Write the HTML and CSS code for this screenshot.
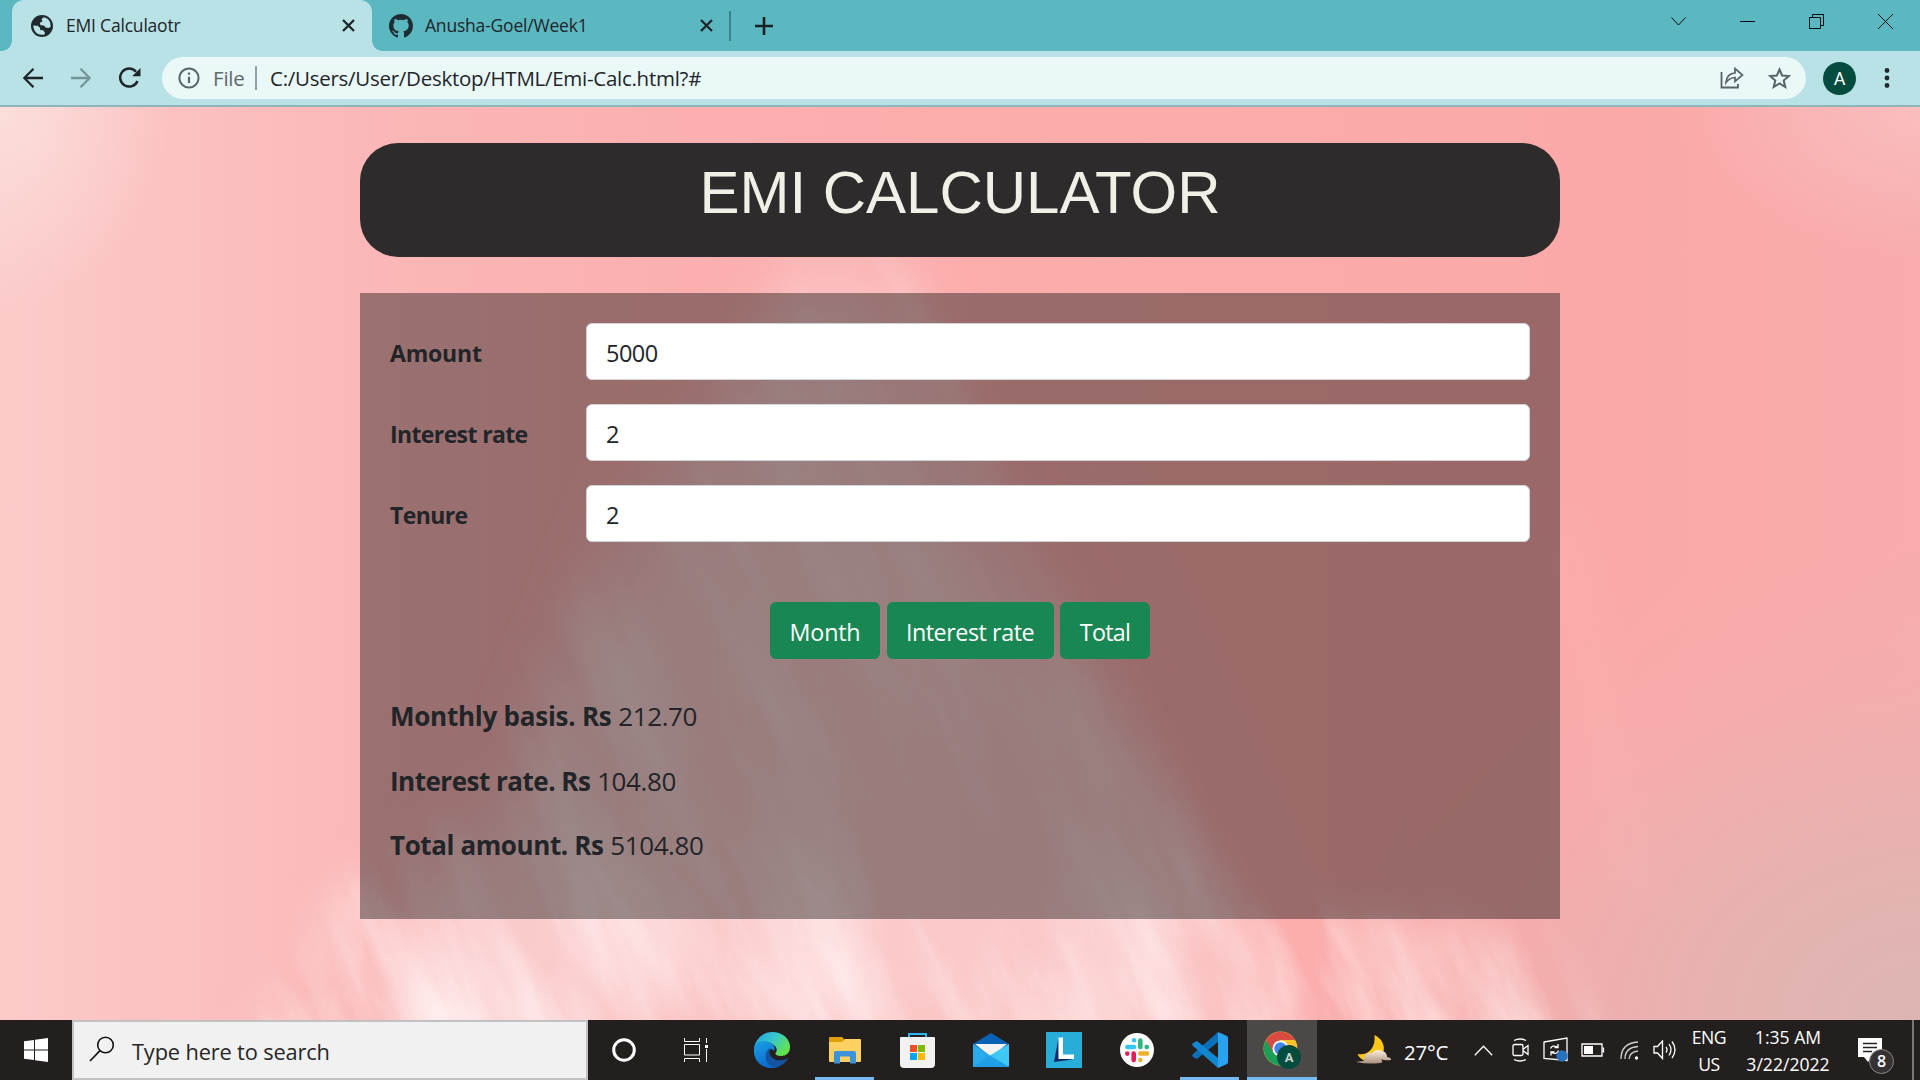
FILE: index.html
```html
<!DOCTYPE html>
<html lang="en">
<head>
<meta charset="utf-8">
<title>EMI Calculaotr</title>
<link rel="stylesheet" href="styles.css">
</head>
<body>
<div class="screen">
  <header class="tabstrip">
    <div class="tab tab-active">
      <svg class="favicon" width="22" height="22" viewBox="0 0 22 22"><circle cx="11" cy="11" r="11" fill="#202a2e"/><path d="M2.200 10.500L6.500 10.700L9 12.700L9.200 15L12 15.300L14 17.500L13.500 19.500Q10 20.500 6.500 18.700Q2.500 16 2.200 10.500Z" fill="#b8e2e5"/><path d="M12.500 2.300Q17 3 19 7L19.800 11.500L17.800 13L14.500 12.500L13 10.500L9.500 10.200L8.800 7.700L11.500 6.500L10.500 4.500Z" fill="#b8e2e5"/></svg>
      <span class="tab-title">EMI Calculaotr</span>
      <svg class="tab-x" width="13" height="13" viewBox="0 0 13 13"><path d="M1 1L12 12M12 1L1 12" stroke="#1c2427" stroke-width="2.3"/></svg>
    </div>
    <div class="tab tab-idle">
      <svg width="24" height="24" viewBox="0 0 16 16"><path fill="#1e2d33" d="M8 0C3.58 0 0 3.58 0 8c0 3.54 2.29 6.53 5.47 7.59.4.07.55-.17.55-.38 0-.19-.01-.82-.01-1.49-2.01.37-2.53-.49-2.69-.94-.09-.23-.48-.94-.82-1.13-.28-.15-.68-.52-.01-.53.63-.01 1.08.58 1.23.82.72 1.21 1.87.87 2.33.66.07-.52.28-.87.51-1.07-1.78-.2-3.64-.89-3.64-3.95 0-.87.31-1.59.82-2.15-.08-.2-.36-1.02.08-2.12 0 0 .67-.21 2.2.82a7.4 7.4 0 0 1 4 0c1.53-1.04 2.2-.82 2.2-.82.44 1.1.16 1.92.08 2.12.51.56.82 1.27.82 2.15 0 3.07-1.87 3.75-3.65 3.95.29.25.54.73.54 1.48 0 1.07-.01 1.93-.01 2.2 0 .21.15.46.55.38A8.01 8.01 0 0 0 16 8c0-4.42-3.58-8-8-8z"/></svg>
      <span class="tab-title">Anusha-Goel/Week1</span>
      <svg class="tab-x" width="13" height="13" viewBox="0 0 13 13"><path d="M1 1L12 12M12 1L1 12" stroke="#1c2427" stroke-width="2.3"/></svg>
    </div>
    <span class="tab-divider"></span>
    <svg class="new-tab" width="18" height="18" viewBox="0 0 18 18"><path d="M9 0V18M0 9H18" stroke="#172023" stroke-width="2.6"/></svg>
    <div class="window-controls">
      <svg width="15" height="15" viewBox="0 0 15 15"><path d="M.5 3.5L7.5 11L14.5 3.5" class="thin"/></svg>
      <svg width="15" height="15" viewBox="0 0 15 15"><path d="M0 7.5H15" class="thin"/></svg>
      <svg width="15" height="15" viewBox="0 0 15 15"><path d="M.5 3.5H11.500V14.500H.5ZM3.500 3.500V.5H14.500V11.500H11.500" class="thin"/></svg>
      <svg width="15" height="15" viewBox="0 0 15 15"><path d="M0 0L15 15M15 0L0 15" class="thin"/></svg>
    </div>
  </header>

  <nav class="toolbar">
    <svg class="nav-icon" width="20" height="20" viewBox="0 0 20 20"><path d="M20 10H1.500M10.500 .8L1.300 10L10.500 19.200" fill="none" stroke="#1f2628" stroke-width="2.3"/></svg>
    <svg class="nav-icon" width="20" height="20" viewBox="0 0 20 20"><path d="M0 10H18.500M9.500 .8L18.700 10L9.500 19.200" fill="none" stroke="#75949a" stroke-width="2.3"/></svg>
    <svg class="nav-icon" width="22" height="22" viewBox="0 0 22 22"><path d="M18.500 14A9 9 0 1 1 17 4.700" fill="none" stroke="#1f2628" stroke-width="2.500"/><path d="M21.500 1V9.300H13.200Z" fill="#1f2628"/></svg>
    <div class="address">
      <svg width="22" height="22" viewBox="0 0 22 22"><circle cx="11" cy="11" r="9.600" fill="none" stroke="#5c6568" stroke-width="2"/><path d="M11 9.700V16M11 5.500V7.700" stroke="#5c6568" stroke-width="2.200"/></svg>
      <span class="scheme">File</span>
      <span class="address-divider"></span>
      <span class="url">C:/Users/User/Desktop/HTML/Emi-Calc.html?#</span>
      <svg class="share" width="24" height="22" viewBox="0 0 24 22"><path d="M1.500 5V20.500H18V17" fill="none" stroke="#596366" stroke-width="1.800"/><path d="M6 15.500C6.500 9.500 10 6.300 15 6V1.500L22.500 8L15 14.500V10.500C11 10.600 8.500 12 6 15.500Z" fill="none" stroke="#596366" stroke-width="1.700"/></svg>
      <svg width="23" height="22" viewBox="0 0 23 22"><path d="M11.500 2.500L14.100 8.500L20.800 9.100L15.700 13.500L17.300 20L11.500 16.500L5.700 20L7.300 13.500L2.200 9.100L8.900 8.500Z" fill="none" stroke="#596366" stroke-width="2"/></svg>
    </div>
    <span class="avatar">A</span>
    <svg width="6" height="20" viewBox="0 0 6 20"><g fill="#20292c"><circle cx="3" cy="2.500" r="2.400"/><circle cx="3" cy="10" r="2.400"/><circle cx="3" cy="17.500" r="2.400"/></g></svg>
  </nav>

  <main class="page">
    <svg class="backdrop" width="1920" height="913" viewBox="0 107 1920 913" preserveAspectRatio="none">
      <defs>
        <filter id="soft" x="-50%" y="-50%" width="200%" height="200%"><feGaussianBlur stdDeviation="38"/></filter>
        <filter id="edge" x="-50%" y="-50%" width="200%" height="200%"><feGaussianBlur stdDeviation="22"/></filter>
        <filter id="streaks" x="0" y="0" width="100%" height="100%"><feTurbulence type="fractalNoise" baseFrequency="0.013 0.003" numOctaves="5" seed="8"/><feColorMatrix values="0 0 0 0 1  0 0 0 0 .91  0 0 0 0 .91  2 0 0 0 -.7"/></filter>
        <linearGradient id="down" x1="0" y1="0" x2="0" y2="1"><stop offset="0" stop-color="#fff" stop-opacity=".25"/><stop offset=".7" stop-color="#fff" stop-opacity=".45"/><stop offset="1" stop-color="#fff"/></linearGradient>
        <mask id="plume" maskUnits="userSpaceOnUse" x="0" y="107" width="1920" height="913"><path d="M805 240L900 245L1000 480L1160 760L1240 900L1540 940L1600 1060H240L330 900L460 800L620 520L740 380Z" fill="url(#down)" filter="url(#edge)"/></mask>
      </defs>
      <path d="M805 270L880 275L960 480L1130 760L1300 1060H400L430 880L540 760L640 520L740 380Z" fill="#fbdadb" opacity=".62" filter="url(#soft)"/>
      <g mask="url(#plume)"><rect x="-200" y="-300" width="2400" height="1900" transform="rotate(-24 960 560)" filter="url(#streaks)"/></g>
      <g fill="none" stroke="#ffd0cf" filter="url(#edge)" opacity=".25" stroke-width="12"><path d="M1080 420Q1200 700 1360 1000M1560 520Q1600 700 1640 900"/></g>
    </svg>
    <div class="container">
      <h1 class="title">EMI CALCULATOR</h1>
      <form class="panel">
        <div class="field"><label>Amount</label><div class="input">5000</div></div>
        <div class="field"><label class="tight">Interest rate</label><div class="input">2</div></div>
        <div class="field"><label class="tight">Tenure</label><div class="input">2</div></div>
        <div class="actions"><button type="button" class="btn btn-month">Month</button><button type="button" class="btn btn-rate">Interest rate</button><button type="button" class="btn btn-total">Total</button></div>
        <p class="result"><b>Monthly basis. Rs</b> <span>212.70</span></p>
        <p class="result"><b class="tight">Interest rate. Rs</b> <span>104.80</span></p>
        <p class="result"><b class="tight">Total amount. Rs</b> <span>5104.80</span></p>
      </form>
    </div>
  </main>

  <footer class="taskbar">
    <div class="cell start"><svg width="24" height="24" viewBox="0 0 24 24"><path fill="#fff" d="M0 3.300L10 2V11.400H0ZM11 1.800L24 0V11.400H11ZM0 12.500H10V22L0 20.700ZM11 12.500H24V24L11 22.200Z"/></svg></div>
    <div class="search"><svg width="26" height="26" viewBox="0 0 26 26"><circle cx="16.500" cy="9" r="7.800" fill="none" stroke="#111" stroke-width="1.600"/><path d="M11 14.700L1 25" stroke="#111" stroke-width="1.700"/></svg><span>Type here to search</span></div>
    <div class="cell"><svg width="24" height="24" viewBox="0 0 24 24"><circle cx="12" cy="12" r="10.300" fill="none" stroke="#fff" stroke-width="3"/></svg></div>
    <div class="cell"><svg width="24" height="24" viewBox="0 0 24 24"><path d="M.5 0V3.500H15.500V0M.5 6.500H15.500V17H.5ZM.5 24V20.500H15.500V24M22.500 0V5M22.500 11V24" fill="none" stroke="#fff"/><rect x="21" y="7" width="3" height="3" fill="#fff"/></svg></div>
    <div class="apps">
      <div class="app"><svg width="36" height="36" viewBox="0 0 36 36"><defs><linearGradient id="e1" x1="0" y1="0" x2="1" y2=".6"><stop offset="0" stop-color="#239be0"/><stop offset=".5" stop-color="#36c6d0"/><stop offset="1" stop-color="#65e34b"/></linearGradient><linearGradient id="e2" x1="0" y1="0" x2=".5" y2="1"><stop offset="0" stop-color="#1aa0e4"/><stop offset="1" stop-color="#0969ce"/></linearGradient></defs><path d="M0 17C1 7 9 0 18 0C29 0 36 7 36 15C36 21 32 24 27 24C23 24 21 22.500 21.500 21C23 19 23.500 17 21 14C14 7 4 9 0 17Z" fill="url(#e1)"/><path d="M0 17C1.500 10 8 8 13 9.500C19 11 22 15 20 19C18 16 14 17 14 22C14 29 23 34 29 31C26 35 22 36 18 36C7 36 -1 28 0 17Z" fill="url(#e2)"/><path d="M15.500 16C9 21 11 34 21 35.500C26 35 31 31 33.500 27.500C34 26.500 33 26.500 32 27C26 30 17 28 15.500 21Z" fill="#14539f"/></svg></div>
      <div class="app app-open"><svg width="32" height="27" viewBox="0 0 32 27"><path d="M0 1Q0 0 1 0H13L16 3V8H0Z" fill="#e0a006"/><path d="M0 5H13L16 2H31Q32 2 32 3V24Q32 25 31 25H1Q0 25 0 24Z" fill="#fdd062"/><path d="M5 26.500V16Q5 14 7 14H25Q27 14 27 16V26.500H21V19.500H11V26.500Z" fill="#3c93db"/></svg></div>
      <div class="app"><svg width="35" height="35" viewBox="0 0 35 35"><path d="M9 7V1H26V7" fill="none" stroke="#29b6f2" stroke-width="2"/><path d="M0 5Q0 4 1 4H34Q35 4 35 5V31Q35 35 31 35H4Q0 35 0 31Z" fill="#f2f2f2"/><path fill="#f25022" d="M10 12H17V19H10Z"/><path fill="#7fba00" d="M18 12H25V19H18Z"/><path fill="#00a4ef" d="M10 20H17V27H10Z"/><path fill="#ffb900" d="M18 20H25V27H18Z"/></svg></div>
      <div class="app"><svg width="36" height="34" viewBox="0 0 36 34"><path d="M0 11L18 0L36 11V20H0Z" fill="#0961b5"/><path d="M2 11H34L18 24Z" fill="#f2f2f2"/><path d="M0 11L18 23L36 34H0Z" fill="#2aa9ec"/><path d="M36 11V34L16 23Z" fill="#40c8f5"/><path d="M0 34L17 22.500L36 34Z" fill="#209ee7"/></svg></div>
      <div class="app"><svg width="36" height="36" viewBox="0 0 36 36"><path fill="#27add8" d="M0 0H36V36H0Z"/><path fill="#0b2c66" d="M12.500 6L8 30L27 27.500L13 26Z"/><path fill="#fff" d="M12.500 5.500H17V22.500H28V27H12.500Z"/></svg></div>
      <div class="app"><svg width="34" height="34" viewBox="0 0 34 34"><circle cx="17" cy="17" r="17" fill="#fff"/><g stroke-width="4.600" stroke-linecap="round"><path d="M14 7.300H14.100M14 14H7.300" stroke="#36c5f0"/><path d="M20.300 7.500V14M26.700 14H26.800" stroke="#2eb67d"/><path d="M20.300 20.500H27M20.300 27V27.100" stroke="#ecb22e"/><path d="M13.700 20.500V27M7.300 20.500V20.600" stroke="#e01e5a"/></g></svg></div>
      <div class="app app-open"><svg width="36" height="36" viewBox="0 0 36 36"><path d="M26 0V10L5 27L1 25Q-.5 23.500 1 22Z" fill="#0b70b8"/><path d="M26 36V26L5 9L1 11Q-.5 12.500 1 14Z" fill="#1286cf"/><path d="M26 0L35 4Q36 4.500 36 6V30Q36 31.500 35 32L26 36Z" fill="#29a3ef"/></svg></div>
      <div class="app app-open app-current"><svg width="38" height="38" viewBox="0 0 38 38"><circle cx="17.500" cy="17.500" r="17" fill="#fbc22d"/><path d="M3 9A17 17 0 0 1 32 9H17.500L9 21Z" fill="#d94b40"/><path d="M3 9A17 17 0 0 0 17 34.500L23 24L10 21Z" fill="#1d9e56"/><circle cx="17.500" cy="17.500" r="8" fill="#fff"/><circle cx="17.500" cy="17.500" r="6.200" fill="#4285e8"/><circle cx="26" cy="26" r="12" fill="#044c3e"/><text x="26" y="31" text-anchor="middle" class="badge-a">A</text></svg></div>
    </div>
    <div class="tray">
      <svg class="moon" width="36" height="30" viewBox="0 0 36 30"><defs><linearGradient id="cl" x1="0" y1="0" x2="0" y2="1"><stop offset="0" stop-color="#fff0dc"/><stop offset="1" stop-color="#a8917e"/></linearGradient></defs><path d="M18.500 0C29 5 31 17 23 23C16 29 5 27 1.500 19C12 21 20 13 18.500 0Z" fill="#fcc81b"/><path d="M8 22Q11 17 16 18Q20 13 26 16Q31 17 31 22Q36 23 35 25Q28 26 25 24Q28 28 24 28Q12 29.500 0 27Q5 26 8 26Z" fill="url(#cl)"/></svg>
      <span class="temp">27°C</span>
      <svg class="up" width="19" height="11" viewBox="0 0 19 11"><path d="M.8 10.200L9.500 1.200L18.200 10.200" class="line"/></svg>
      <svg class="cam" width="18" height="24" viewBox="0 0 18 24"><path d="M2 2.500Q8 -.5 14 2.500M2 21.500Q8 24.500 14 21.500M2.500 6.500H9.500Q11 6.500 11 8V16Q11 17.500 9.500 17.500H2.500Q1 17.500 1 16V8Q1 6.500 2.500 6.500M11.500 11L16 7.500V16.500L11.500 13" class="line"/></svg>
      <svg class="sync" width="26" height="26" viewBox="0 0 26 26"><path d="M1 5L24 1V23.500L1 21.500Z" class="line"/><path d="M7.500 11.500Q9 7.500 14.500 10M15 7V10.500H11.500M15.500 13.500Q14 18 8.500 15.500M8 18.500V15H11.500" class="line"/><circle cx="19" cy="19" r="5.700" fill="#2b72be"/></svg>
      <svg class="battery" width="24" height="14" viewBox="0 0 24 14"><path d="M1 1H21V13H1ZM22.500 4.500V9.500" class="line"/><path d="M3 3H12V11H3Z" fill="#fff"/></svg>
      <svg class="wifi" width="19" height="19" viewBox="0 0 19 19"><path d="M1 18Q1 2 18 1M5 18Q5 6.500 18 5.500M9 18Q9.500 11 18 10" class="line" opacity=".8"/><circle cx="16.500" cy="17" r="1.700" fill="#fff"/></svg>
      <svg class="sound" width="24" height="20" viewBox="0 0 24 20"><path d="M1 6.500H4.500L9.500 1V18.500L4.500 13H1Z" class="line"/><path d="M13 7Q15 9.700 13 12.500M16 4Q20 9.700 16 15.500M19 1.500Q25 9.700 19 18" class="line"/></svg>
      <div class="stack lang"><span>ENG</span><span>US</span></div>
      <div class="stack clock"><span>1:35 AM</span><span>3/22/2022</span></div>
      <div class="notes"><svg width="24" height="25" viewBox="0 0 24 25"><path d="M0 0H24V19H14L10 24L6 19H0Z" fill="#fff"/><path d="M5 5.500H19M5 9.500H19M5 13.500H14" stroke="#222" stroke-width="1.300"/></svg><span class="count">8</span></div>
      <span class="show-desktop"></span>
    </div>
  </footer>
</div>
</body>
</html>
```
FILE: styles.css
```css
* { box-sizing: border-box; }
body { margin: 0; font-family: "Open Sans", "Noto Sans", sans-serif; color: #212529; }
svg { display: block; flex: none; }
.screen { width: 1920px; height: 1080px; overflow: hidden; display: flex; flex-direction: column; }
.thin { fill: none; stroke: #050c0e; stroke-width: 1; }
.line { fill: none; stroke: #fff; stroke-width: 1.3; }

/* browser tabs */
.tabstrip { height: 51px; background: #5bb8c1; display: flex; align-items: center; padding-left: 12px; }
.tab { display: flex; align-items: center; height: 51px; font-size: 17.5px; letter-spacing: -.2px; white-space: nowrap; }
.tab-active { position: relative; width: 360px; background: #b8e2e5; border-radius: 12px 12px 0 0; padding: 0 17px 0 19px; }
.tab-active::before, .tab-active::after { content: ""; position: absolute; bottom: 0; width: 10px; height: 10px; }
.tab-active::before { left: -10px; background: radial-gradient(circle at 0 0, transparent 9.5px, #b8e2e5 10px); }
.tab-active::after { right: -10px; background: radial-gradient(circle at 100% 0, transparent 9.5px, #b8e2e5 10px); }
.tab-title { margin: -1px 0 0 13px; }
.tab-x { margin-left: auto; }
.tab-idle { width: 341px; padding-left: 17px; }
.tab-idle .tab-title { margin-left: 12px; letter-spacing: -.2px; }
.tab-divider { width: 2px; height: 30px; margin-left: 16px; background: #3c8188; }
.new-tab { margin-left: 24px; }
.window-controls { display: flex; gap: 54px; margin-left: auto; padding: 0 27px 8px 0; }

/* address row */
.toolbar { height: 56px; background: #b8e2e5; border-bottom: 2px solid #8fb4b9; display: flex; align-items: center; padding: 0 30px 0 23px; }
.nav-icon { margin-right: 28px; }
.nav-icon + .nav-icon + .nav-icon { margin-right: 21px; }
.address { flex: 1; height: 42px; margin-right: 17px; border-radius: 21px; background: #ebf8f8; display: flex; align-items: center; padding: 0 15px 0 16px; font-size: 20.5px; letter-spacing: -.2px; }
.scheme { width: 42px; margin-left: 13px; color: #5f686b; }
.address-divider { width: 2px; height: 24px; background: #949fa1; }
.url { margin-left: 13px; letter-spacing: -.27px; }
.share { margin: 0 24px 0 auto; }
.avatar { width: 33px; height: 33px; border-radius: 50%; background: #044c3e; color: #fff; font: 18px/33px Roboto, sans-serif; text-align: center; margin-right: 28px; }

/* calculator */
.page { position: relative; flex: 1; overflow: hidden; background: radial-gradient(ellipse 620px 480px at 100% 100%, #dcb6b4 0, #e2b4b2cc 35%, #f0b0af66 70%, transparent 100%), radial-gradient(ellipse 170px 200px at 0 0, #fbdedb, transparent), radial-gradient(ellipse 240px 150px at 100% 0, #fabdbe, transparent), linear-gradient(90deg, #fbcbca 0, #fbbfbf 11%, #fbb5b5 22%, #fbafae 38%, #fbacab 60%, #faa9a8 85%, #f8acac 100%); }
.backdrop { position: absolute; inset: 0; }
.container { position: relative; width: 1200px; margin: 36px auto 0; }
.title { height: 114px; margin: 0 0 36px; padding-top: 14px; border-radius: 38px; background: #2d2b2c; color: #f1f0e7; font: 60px/72px "Liberation Sans", Arial, sans-serif; text-align: center; }
.panel { height: 626px; padding: 30px; background: rgba(0, 0, 0, .385); }
.field { display: flex; margin-bottom: 24px; font-size: 23.5px; line-height: 57px; }
.field label { width: 196px; font-weight: 700; font-size: 23px; letter-spacing: -.2px; padding-top: 2px; height: 57px; }
.field label.tight { letter-spacing: -.62px; }
.field .input { flex: 1; height: 57px; padding: 1px 19px 0; background: #fff; border: 1px solid #ced4da; border-radius: 6px; letter-spacing: -.5px; }
.actions { display: flex; justify-content: center; gap: 6.5px; margin: 60px 0 37px; }
.btn { height: 57px; padding: 3px 0 0; border: 0; border-radius: 6px; background: #198754; color: #fff; font: 23.3px "Open Sans", sans-serif; letter-spacing: -.45px; }
.btn-month { width: 110px; letter-spacing: -.2px; }
.btn-rate { width: 167px; }
.btn-total { width: 90px; letter-spacing: -.7px; }
.result { margin: 0 0 24px; font-size: 26px; line-height: 40.6px; }
.result b { letter-spacing: -.25px; }
.result .tight { letter-spacing: -.5px; }
.result span { letter-spacing: -.4px; }
.result:last-child b { letter-spacing: -.4px; }

/* taskbar */
.taskbar { height: 60px; background: #221f1e; display: flex; color: #fff; }
.cell { width: 72px; display: flex; align-items: center; justify-content: center; }
.search { width: 516px; border: 2px solid #c2c2c2; background: #f1f1f1; color: #262626; display: flex; align-items: center; padding: 0 0 2px 16px; font-size: 21.8px; letter-spacing: -.15px; }
.search span { margin: 4px 0 0 16px; }
.search svg { margin-left: -1px; margin-right: 1px; }
.apps { display: flex; padding-left: 3px; }
.app { width: 73px; height: 60px; display: flex; justify-content: center; align-items: center; position: relative; }
.app-open::after { content: ""; position: absolute; left: 7px; right: 7px; bottom: 0; height: 3px; background: #76b9ed; }
.app-current { width: 70px; margin-left: 1px; background: #4b4948; }
.app-current::after { left: 0; right: 0; }
.badge-a { font: 700 13px Roboto, sans-serif; fill: #c5d7d2; }
.tray { display: flex; align-items: center; margin-left: auto; }
.temp { margin: 4px 24px 0 12px; font-size: 20.5px; letter-spacing: -.2px; width: 46px; }
.cam { margin-left: 19px; }
.sync { margin-left: 13px; }
.battery { margin-left: 12px; }
.wifi { margin-left: 15px; }
.sound { margin-left: 14px; }
.stack { display: flex; flex-direction: column; text-align: center; font-size: 17.6px; line-height: 27px; padding-top: 1px; letter-spacing: -.15px; }
.lang { width: 40px; margin-left: 12px; letter-spacing: -.5px; }
.clock { width: 100px; margin-left: 9px; letter-spacing: 0; }
.notes { position: relative; width: 24px; margin-left: 20px; }
.count { position: absolute; left: 11px; top: 11px; width: 25px; height: 25px; border: 1px solid #888; border-radius: 50%; background: #343232; font: 600 16px/23px "Open Sans", sans-serif; text-align: center; }
.show-desktop { width: 8px; height: 60px; margin-left: 30px; border-left: 2px solid #777; }
```
